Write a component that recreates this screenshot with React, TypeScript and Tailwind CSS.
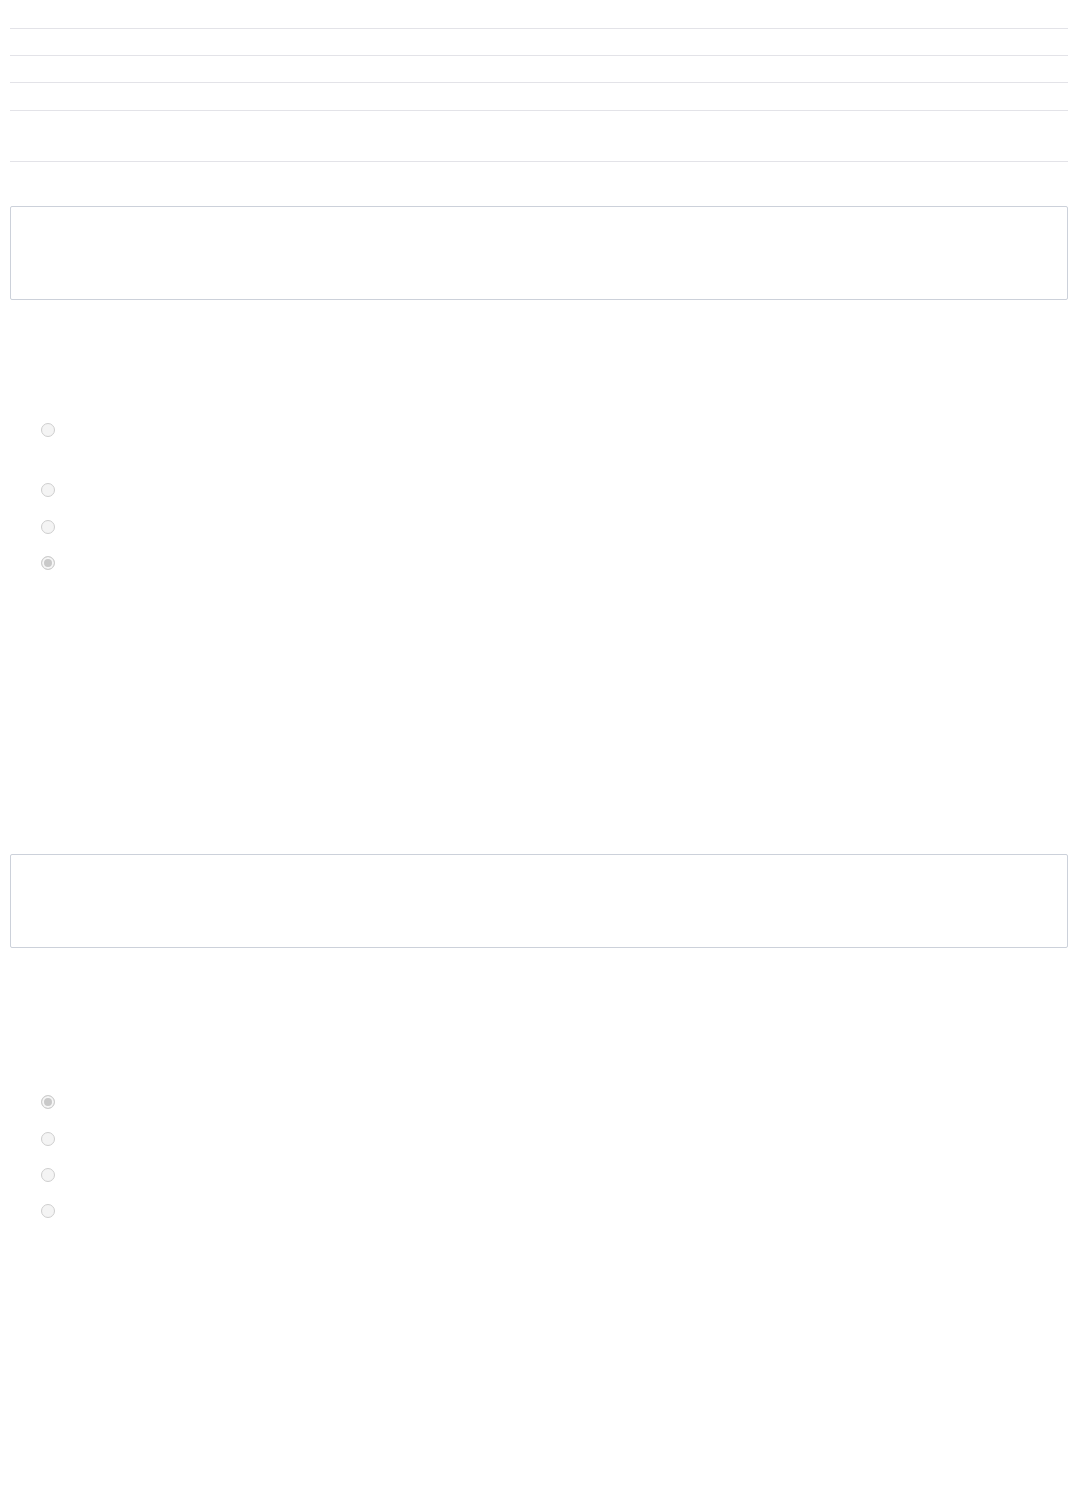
const Radio = ({ checked = false, name }: { checked?: boolean; name: string }) => (
  <input
    type="radio"
    name={name}
    disabled
    defaultChecked={checked}
    className="m-0 block h-[14px] w-[14px] appearance-none rounded-full border-[1.5px] border-[#cecece] bg-[#f4f4f4] checked:bg-[#c9c9c9] checked:shadow-[inset_0_0_0_2px_#f6f6f6]"
  />
);

const App = () => {
  const rows = ['h-[29px]', 'h-[27px]', 'h-[27px]', 'h-[28px]', 'h-[51px]'];

  return (
    <div className="min-h-screen bg-white pl-[10px] pr-[9px] font-['Liberation_Sans',sans-serif]">
      {/* header rows */}
      {rows.map((h, i) => (
        <div key={i} className={`${h} border-b border-[#e3e3e8]`} />
      ))}

      {/* first text box */}
      <div className="mt-[44px] h-[94px] rounded-[2px] border border-[#ccd1da]" />

      {/* first radio group */}
      <div className="mt-[123px] pl-[31px]">
        <div className="h-[60px]">
          <Radio name="g1" />
        </div>
        <div className="h-[37px]">
          <Radio name="g1" />
        </div>
        <div className="h-[36px]">
          <Radio name="g1" />
        </div>
        <div className="h-[14px]">
          <Radio name="g1" checked />
        </div>
      </div>

      {/* second text box */}
      <div className="mt-[284px] h-[94px] rounded-[2px] border border-[#ccd1da]" />

      {/* second radio group */}
      <div className="mt-[147px] pl-[31px]">
        <div className="h-[37px]">
          <Radio name="g2" checked />
        </div>
        <div className="h-[36px]">
          <Radio name="g2" />
        </div>
        <div className="h-[36px]">
          <Radio name="g2" />
        </div>
        <div className="h-[14px]">
          <Radio name="g2" />
        </div>
      </div>
    </div>
  );
};

export default App;
